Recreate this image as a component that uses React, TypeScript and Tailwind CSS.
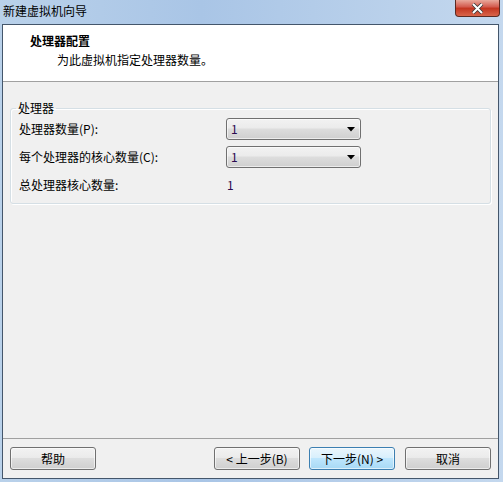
import React, { useState } from 'react';

const font = `[font-family:"Noto_Sans_CJK_SC","Liberation_Sans",sans-serif]`;

// 윈도7 스타일 버튼
function WinButton({ label, primary, className }: { label: string; primary?: boolean; className?: string }) {
  const base = primary
    ? 'border-[#3c7fb1] bg-[linear-gradient(#eaf6fd_0%,#d9f0fc_45%,#bee6fd_50%,#a7d9f5_100%)]'
    : 'border-[#707070] bg-[linear-gradient(#f2f2f2_0%,#ebebeb_45%,#dddddd_50%,#cfcfcf_100%)]';
  return (
    <button
      className={`${base} ${className} h-[23px] w-[86px] border rounded-[3px] text-[12px] leading-none text-black flex items-center justify-center pt-[1px] shadow-[inset_0_0_0_1px_rgba(255,255,255,0.6)]`}
    >
      {label}
    </button>
  );
}

// 드롭다운 (콤보박스)
function Combo({ value }: { value: string }) {
  return (
    <div className="w-[135px] h-[22px] border border-[#707070] rounded-[3px] bg-[linear-gradient(#f2f2f2_0%,#ebebeb_45%,#dddddd_50%,#cfcfcf_100%)] shadow-[inset_0_0_0_1px_rgba(255,255,255,0.6)] flex items-center pl-[4px] pr-[5px]">
      <span className="flex-1 text-[12px] text-[#2a0a50]">{value}</span>
      <svg width="8" height="5" viewBox="0 0 8 5">
        <path d="M0 0H8L4 4.5Z" fill="#000" />
      </svg>
    </div>
  );
}

export default function App() {
  const [count] = useState('1');
  const [cores] = useState('1');

  return (
    <div className={`${font} w-[503px] h-[482px] flex flex-col bg-[linear-gradient(90deg,#b9d1ea,#a9c5e6_40%,#c4d8ee)] overflow-hidden`}>
      {/* 타이틀 바 */}
      <div className="h-[24px] flex items-start justify-between pl-[3px]">
        <span className="text-[12px] leading-[22px] text-black">新建虚拟机向导</span>
        <div className="w-[45px] h-[17px] mr-[3px] rounded-b-[4px] border border-t-0 border-[#5c2a22] bg-[linear-gradient(#e9a99c,#d2574a_45%,#c2341f_50%,#d9654a)] flex items-center justify-center">
          <svg width="13" height="11" viewBox="0 0 13 11">
            <path d="M2 1L11 10M11 1L2 10" stroke="#3a3a3a" strokeWidth="3.6" />
            <path d="M2 1L11 10M11 1L2 10" stroke="#fff" strokeWidth="2" />
          </svg>
        </div>
      </div>

      {/* 본문 영역 */}
      <div className="flex-1 ml-[2px] mr-[4px] mb-[3px] border border-[#44566b] bg-[#f0f0f0] flex flex-col">
        {/* 헤더 */}
        <div className="h-[57px] bg-white border-b border-[#a0a0a0] pl-[27px] pt-[8px]">
          <p className="text-[12px] leading-[16px] font-bold text-black">处理器配置</p>
          <p className="text-[12px] leading-[16px] pl-[27px] pt-[3px] text-black">为此虚拟机指定处理器数量。</p>
        </div>

        {/* 처리기 그룹 */}
        <fieldset className="mx-[7px] mt-[18px] border border-[#d5dfe5] rounded-[3px] shadow-[inset_1px_1px_0_#fff,1px_1px_0_#fff] pl-[8px] pt-[2px] pb-[7px]">
          <legend className="ml-[-3px] px-[2px] text-[12px] leading-[16px] text-black">处理器</legend>
          <div className="flex flex-col gap-[6px] text-[12px] text-black">
            <div className="flex items-center h-[22px]">
              <span className="w-[207px]">处理器数量(P):</span>
              <Combo value={count} />
            </div>
            <div className="flex items-center h-[22px]">
              <span className="w-[207px]">每个处理器的核心数量(C):</span>
              <Combo value={cores} />
            </div>
            <div className="flex items-center h-[22px]">
              <span className="w-[207px]">总处理器核心数量:</span>
              <span className="pl-[1px] text-[#2a0a50]">1</span>
            </div>
          </div>
        </fieldset>

        <div className="flex-1" />

        {/* 버튼 */}
        <div className="h-[40px] border-t border-[#a0a0a0] flex items-center px-[7px] pb-[1px]">
          <WinButton label="帮助" />
          <div className="flex-1" />
          <WinButton label="< 上一步(B)" />
          <WinButton label="下一步(N) >" primary className="ml-[9px]" />
          <WinButton label="取消" className="ml-[10px]" />
        </div>
      </div>
    </div>
  );
}
